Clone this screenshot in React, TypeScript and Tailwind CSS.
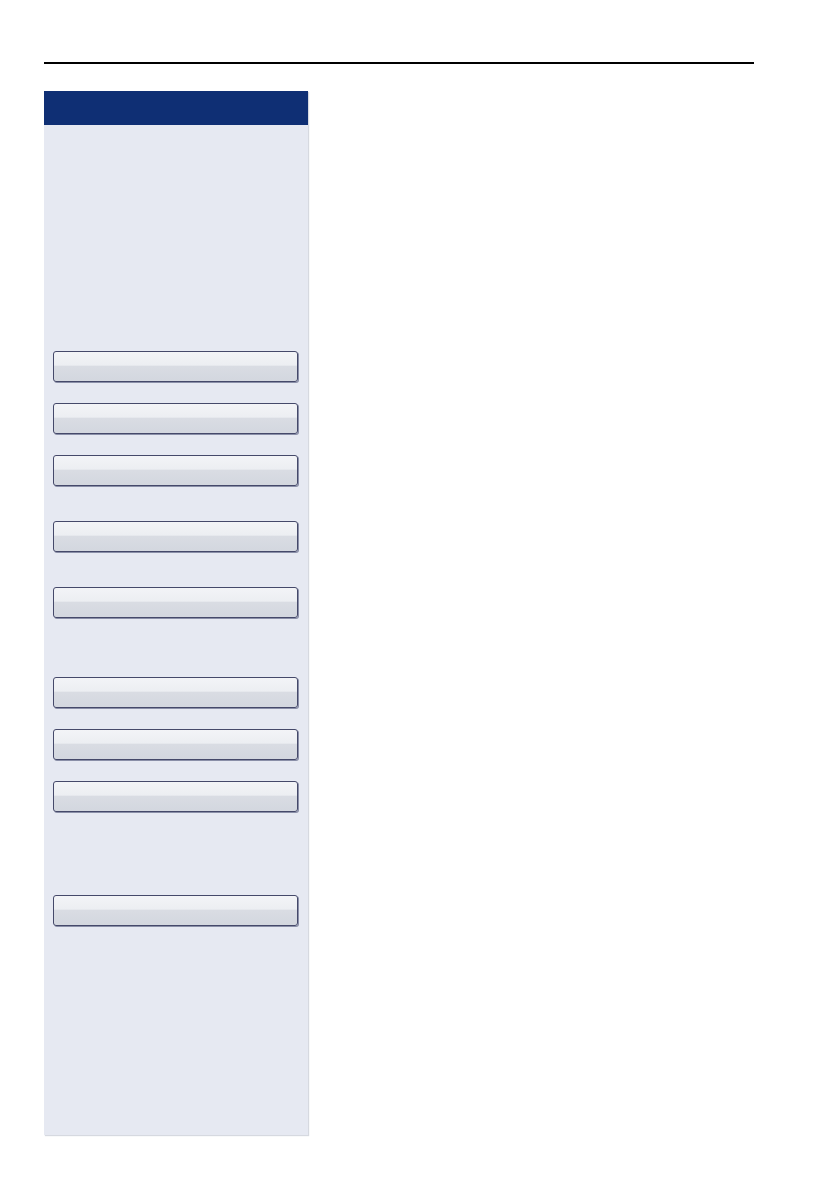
import React from "react";

function Btn({ mt }: { mt: string }) {
  return (
    <div
      className={`${mt} h-[31px] w-[245px] rounded-[3px] border border-[#45496a] shadow-[1px_1px_0_#8a8fa8] bg-[linear-gradient(to_bottom,#f3f4f7_0%,#eceef2_45%,#d9dce3_50%,#d3d7df_100%)]`}
    />
  );
}

export default function App() {
  return (
    <div className="min-h-[1192px] w-[838px] bg-white font-['Liberation_Sans',sans-serif]">
      <div className="h-[62px]" />
      <div className="ml-[44px] h-[1.5px] w-[710px] bg-black" />
      <div className="ml-[44px] mt-[27px] flex w-[264px] flex-col shadow-[1px_1px_1px_#d6d9e0]">
        <div className="h-[34px] bg-[#0f2f74]" />
        <div className="flex h-[1010px] flex-col bg-[#e6e9f2] pl-[9px]">
          <Btn mt="mt-[226px]" />
          <Btn mt="mt-[21px]" />
          <Btn mt="mt-[21px]" />
          <Btn mt="mt-[35px]" />
          <Btn mt="mt-[35px]" />
          <Btn mt="mt-[59px]" />
          <Btn mt="mt-[21px]" />
          <Btn mt="mt-[21px]" />
          <Btn mt="mt-[83px]" />
        </div>
      </div>
    </div>
  );
}
